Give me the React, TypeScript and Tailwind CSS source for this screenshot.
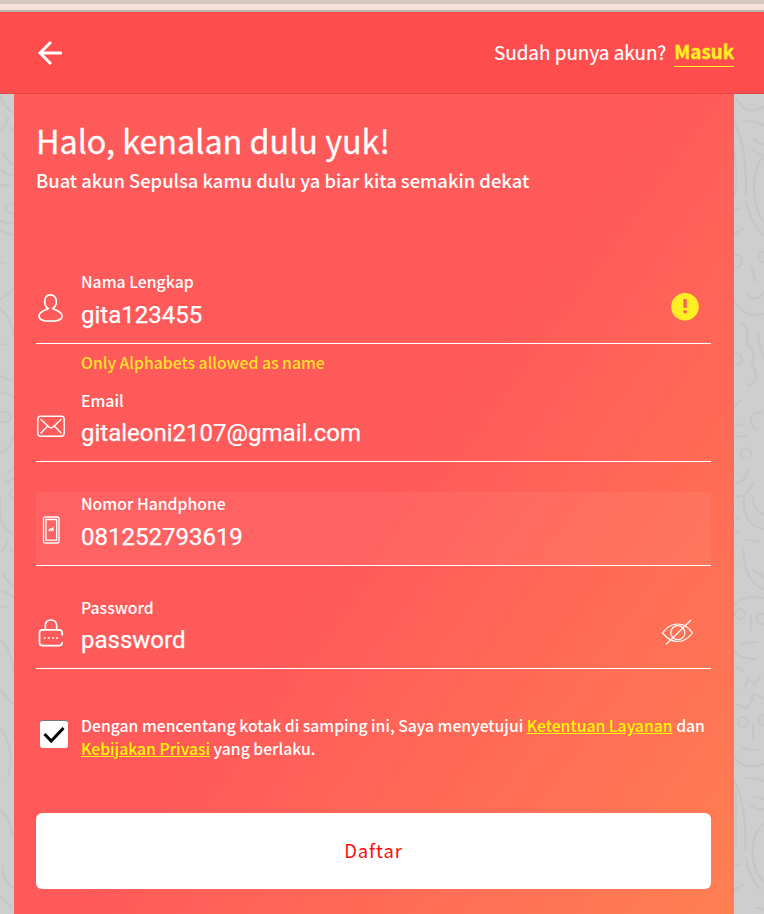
import React from "react";

const sans = "font-['Noto_Sans_CJK_SC','Noto_Sans',sans-serif]";

function Doodles() {
  return (
    <svg className="absolute inset-0 h-full w-full" viewBox="0 94 764 820" fill="none" stroke="#c6c6c6" strokeWidth="2.2" strokeLinecap="round">
      <path d="M0 95Q4 108 14 113M8 118Q6 127 0 131M10 127L14 131M4 154Q8 162 14 165M2 170Q6 175 14 175M0 185L10 186M14 204C3 204 3 214 14 214M0 221Q8 224 14 223M0 230L12 235M0 262L5 263M14 287Q10 295 0 299M0 308Q20 325 14 371M0 344L7 345M0 376Q10 379 14 382M0 392Q9 393 14 398M14 435Q10 450 0 453M14 468L8 473M14 478L6 483M14 490C8 490 8 498 14 498M0 497V515Q2 530 14 534M8 538Q7 547 0 552M10 549L14 553M4 575Q8 584 14 586M2 591L14 597M0 606L10 608" />
      <ellipse cx="4" cy="417" rx="7" ry="5" />
      <path d="M0 640Q13 650 13 673M0 690L12 703M1 729Q16 750 8 777M0 810Q12 819 12 837M2 866Q4 883 14 888M0 897L12 907" />
      <path d="M736 98Q746 118 764 106M746 121Q755 121 764 125M754 139Q758 144 764 144M752 150Q758 155 764 155M734 122Q747 147 746 194M734 147Q737 170 735 195M764 157C750 166 751 208 764 222M746 202Q750 221 764 236M734 210L741 208M734 234L743 229M752 268L755 281M747 295Q757 304 764 291M734 302Q746 319 764 314M741 324Q751 328 746 345Q757 347 752 365Q759 375 754 381Q752 386 747 385M758 332Q759 348 764 358M734 407L741 400M762 413C748 411 748 425 757 430M734 426L743 424M734 437L746 436M734 482Q744 485 749 469M734 496Q746 499 754 482" />
      <circle cx="736" cy="261" r="6" /><circle cx="764" cy="257" r="5" /><circle cx="736" cy="359" r="6" /><circle cx="746" cy="453" r="5" />
      <path d="M744 498Q742 525 764 529M753 498Q753 510 764 515M734 517L740 519M734 530L739 532M746 540L760 542M743 547Q744 583 764 589M754 570L764 578M734 605Q745 594 764 598M751 615V630M742 644L757 642M734 650Q739 659 756 659M734 666L743 671M744 689L748 679L755 684L760 676M751 700L754 694L764 699M736 704L747 708L753 698M753 724V738M743 748Q751 751 758 750M734 756Q743 772 764 764M746 778Q756 777 764 781M754 796L764 799M751 806Q756 810 764 809M734 780Q747 807 745 850M736 793V850M764 823C748 836 750 870 764 882M746 858Q749 877 760 889M734 866L741 864M734 890L743 885M755 908Q759 907 764 910" />
      <circle cx="740" cy="614" r="5" /><circle cx="762" cy="619" r="5" /><circle cx="743" cy="722" r="5" /><circle cx="764" cy="720" r="5" />
    </svg>
  );
}

function PersonIcon() {
  return (
    <svg width="30" height="32" viewBox="0 0 30 32" fill="none" stroke="white" strokeWidth="1.7">
      <path d="M14.5 1.8C10.8 1.8 8.7 4.6 8.7 8.5C8.7 11.8 10 14.2 12.2 15.4C10.5 17.4 3 17.6 3 23.2C3 26.6 7.5 28.2 14.5 28.2S26 26.6 26 23.2C26 17.6 18.5 17.4 16.8 15.4C19 14.2 20.3 11.8 20.3 8.5C20.3 4.6 18.2 1.8 14.5 1.8Z" />
    </svg>
  );
}

function MailIcon() {
  return (
    <svg width="30" height="32" viewBox="0 0 30 32" fill="none" stroke="white" strokeWidth="1.4">
      <rect x="1.8" y="5.3" width="26.4" height="20" rx="3" />
      <path d="M5 8.5L13 16Q15 17.7 17 16L25 8.5M5 22L11.5 15.2M25 22L18.5 15.2" strokeLinecap="round" />
    </svg>
  );
}

function PhoneIcon() {
  return (
    <svg width="30" height="32" viewBox="0 0 30 32" fill="none" stroke="white" strokeWidth="1.3">
      <rect x="7.5" y="1" width="15.5" height="26" rx="1.6" />
      <path d="M10 3.5H20.7V24.2H10ZM12.4 15L15.2 12.2M14.8 15L17 12.2V14.8" />
    </svg>
  );
}

function LockIcon() {
  return (
    <svg width="30" height="32" viewBox="0 0 30 32" fill="none" stroke="white" strokeWidth="1.7" strokeLinecap="round">
      <path d="M9.3 11V8Q9.3 2 15 2T20.7 8V11M26.2 17V15Q26.2 11.8 23 11.8H6.7Q3.5 11.8 3.5 15V24.5Q3.5 27.7 6.7 27.7H23Q26.2 27.7 26.2 24.5" />
      <path d="M8.5 20H9M12.5 20H13M16.7 20H17.2M20.7 20H21.2" />
    </svg>
  );
}

type FieldProps = {
  label: string;
  value: string;
  icon: React.ReactNode;
  trailing?: React.ReactNode;
  labelClass: string;
  valueClass: string;
  className: string;
};

function Field({ label, value, icon, trailing, labelClass, valueClass, className }: FieldProps) {
  return (
    <div className={"flex border-b border-white " + className}>
      <div className="w-[45px] pt-[24px]">{icon}</div>
      <div className="flex-1 whitespace-nowrap">
        <div className={"text-[15.8px] font-medium leading-[24px] " + labelClass}>{label}</div>
        <div className={"font-['Roboto',sans-serif] text-[24px] leading-[32px] [-webkit-text-stroke:0.25px] " + valueClass}>{value}</div>
      </div>
      {trailing}
    </div>
  );
}

export default function App() {
  return (
    <div className={"flex h-[914px] w-[764px] flex-col overflow-hidden text-white " + sans}>
      <div className="h-1 shrink-0 bg-[#d6c8bf]" />
      <div className="h-1.5 shrink-0 bg-[#f5e1d9]" />
      <div className="h-0.5 shrink-0 bg-[#c3b3ae]" />
      <header className="flex h-[82px] shrink-0 items-center justify-between border-b border-[#e64545] bg-[#ff4d4d] pl-[38px] pr-[30px]">
        <svg width="25" height="24" viewBox="0 0 25 24" fill="none" stroke="white" strokeWidth="3">
          <path d="M13 1L2 12L13 23M2 12H24" />
        </svg>
        <div className="flex items-center gap-[8px] whitespace-nowrap text-[18.9px] leading-[26px]">
          <span className="pb-0.5 [-webkit-text-stroke:0.2px]">Sudah punya akun?</span>
          <a className="border-b border-[#ffee22] pb-[3px] text-[18.8px] font-bold leading-[25px] text-[#ffee22] [-webkit-text-stroke:0.4px]">Masuk</a>
        </div>
      </header>
      <div className="relative h-[820px] bg-[#cecece] px-[14px]">
        <Doodles />
        <main className="relative h-[820px] w-[720px] bg-[linear-gradient(126deg,#ff5a5a_50%,#ff7f52_100%)] pl-[22px] pr-[23px]">
          <h1 className="pt-[23px] whitespace-nowrap text-[32.3px] leading-[46px] [-webkit-text-stroke:0.3px]">Halo, kenalan dulu yuk!</h1>
          <p className="mt-[4px] whitespace-nowrap text-[18.36px] font-medium leading-[26px]">Buat akun Sepulsa kamu dulu ya biar kita semakin dekat</p>

          <Field
            label="Nama Lengkap"
            value="gita123455"
            icon={<PersonIcon />}
            labelClass="pt-px"
            valueClass="mt-[5px]"
            className="mt-[76px] h-[75px]"
            trailing={
              <svg className="mr-3 mt-[24px]" width="28" height="28" viewBox="0 0 28 28">
                <circle cx="14" cy="13.7" r="13.8" fill="#ffee22" />
                <rect x="12.4" y="6" width="3.4" height="9" rx=".8" fill="#ff625a" />
                <rect x="12.4" y="17.3" width="3.4" height="3" rx="1" fill="#ff625a" />
              </svg>
            }
          />
          <p className="ml-[45px] mt-[7px] whitespace-nowrap text-[15.75px] font-medium leading-[24px] text-[#ffe12b]">Only Alphabets allowed as name</p>
          <Field label="Email" value="gitaleoni2107@gmail.com" icon={<MailIcon />} labelClass="pt-0.5" valueClass="mt-[4px]" className="mt-[12px] h-[75px]" />
          <Field label="Nomor Handphone" value="081252793619" icon={<PhoneIcon />} labelClass="" valueClass="mt-[5px]" className="mt-[30px] h-[74px] bg-white/5" />
          <Field
            label="Password"
            value="password"
            icon={<LockIcon />}
            labelClass="pt-0.5"
            valueClass="mt-[4px]"
            className="mt-[28px] h-[75px]"
            trailing={
              <svg className="mr-[17px] mt-[25px]" width="34" height="28" viewBox="0 0 34 28" fill="none" stroke="white" strokeWidth="1.2">
                <path d="M2.5 14Q9 5 17.7 5T32.5 14Q26 22.5 17.7 22.5T2.5 14ZM6 25.5L31 1" />
                <circle cx="17.8" cy="13.7" r="7" />
              </svg>
            }
          />
          <div className="mt-[45px] flex whitespace-nowrap text-[15.74px] font-medium leading-[23px]">
            <div className="ml-1 mr-[13px] mt-[6px] flex h-7 w-7 shrink-0 items-center justify-center rounded-[3px] border-t border-[#777] bg-white">
              <svg width="22" height="18" viewBox="0 0 22 18" fill="none" stroke="black" strokeWidth="3">
                <path d="M1.5 8L8.2 15L20.5 2" />
              </svg>
            </div>
            <p>
              Dengan mencentang kotak di samping ini, Saya menyetujui <a className="text-[#fff700] underline">Ketentuan Layanan</a> dan
              <br />
              <a className="text-[#fff700] underline">Kebijakan Privasi</a> yang berlaku.
            </p>
          </div>
          <button className="mt-[53px] block h-[76px] w-full rounded-md bg-white text-[18.4px] tracking-[0.9px] text-[#ff0a0a]">Daftar</button>
        </main>
      </div>
    </div>
  );
}
